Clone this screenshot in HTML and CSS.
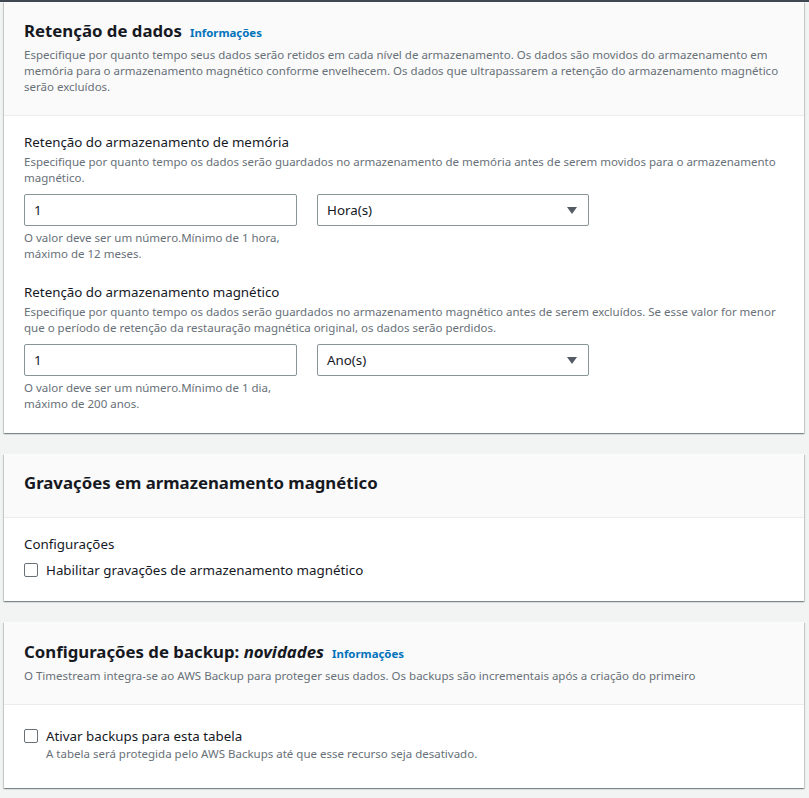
FILE: index.html
```html
<!DOCTYPE html>
<html lang="pt-BR">
<head>
<meta charset="utf-8">
<title>Retenção de dados</title>
<link rel="stylesheet" href="styles.css">
</head>
<body>
<div class="topbar"></div>
<main class="page">
  <section class="card">
    <header class="card-header">
      <h2 class="title">Retenção de dados<a class="info" href="#">Informações</a></h2>
      <p class="desc">Especifique por quanto tempo seus dados serão retidos em cada nível de armazenamento. Os dados são movidos do armazenamento em memória para o armazenamento magnético conforme envelhecem. Os dados que ultrapassarem a retenção do armazenamento magnético serão excluídos.</p>
    </header>
    <div class="card-body body-fields">
      <div class="field">
        <div class="label">Retenção do armazenamento de memória</div>
        <div class="field-desc">Especifique por quanto tempo os dados serão guardados no armazenamento de memória antes de serem movidos para o armazenamento magnético.</div>
        <div class="controls">
          <div class="col">
            <input class="input" type="text" value="1">
            <div class="constraint">O valor deve ser um número.Mínimo de 1 hora, máximo de 12 meses.</div>
          </div>
          <div class="select">
            <span>Hora(s)</span>
            <svg class="caret" width="10" height="7" viewBox="0 0 10 7"><path d="M0 0H10L5 7Z"/></svg>
          </div>
        </div>
      </div>
      <div class="field field-next">
        <div class="label">Retenção do armazenamento magnético</div>
        <div class="field-desc">Especifique por quanto tempo os dados serão guardados no armazenamento magnético antes de serem excluídos. Se esse valor for menor que o período de retenção da restauração magnética original, os dados serão perdidos.</div>
        <div class="controls">
          <div class="col">
            <input class="input" type="text" value="1">
            <div class="constraint">O valor deve ser um número.Mínimo de 1 dia, máximo de 200 anos.</div>
          </div>
          <div class="select">
            <span>Ano(s)</span>
            <svg class="caret" width="10" height="7" viewBox="0 0 10 7"><path d="M0 0H10L5 7Z"/></svg>
          </div>
        </div>
      </div>
    </div>
  </section>

  <section class="card">
    <header class="card-header header-solo">
      <h2 class="title">Gravações em armazenamento magnético</h2>
    </header>
    <div class="card-body body-tight">
      <div class="label">Configurações</div>
      <label class="check-row">
        <input class="checkbox" type="checkbox">
        <span>Habilitar gravações de armazenamento magnético</span>
      </label>
    </div>
  </section>

  <section class="card">
    <header class="card-header header-backup">
      <h2 class="title">Configurações de backup: <em>novidades</em><a class="info" href="#">Informações</a></h2>
      <p class="desc">O Timestream integra-se ao AWS Backup para proteger seus dados. Os backups são incrementais após a criação do primeiro</p>
    </header>
    <div class="card-body body-backup">
      <label class="check-row">
        <input class="checkbox" type="checkbox">
        <span>Ativar backups para esta tabela</span>
      </label>
      <div class="check-desc">A tabela será protegida pelo AWS Backups até que esse recurso seja desativado.</div>
    </div>
  </section>
</main>
</body>
</html>
```

FILE: styles.css
```css
* { box-sizing: border-box; }

html, body {
  margin: 0;
  padding: 0;
  background: #f2f3f3;
  font-family: "Noto Sans", "Open Sans", sans-serif;
  color: #16191f;
}

.topbar {
  height: 2px;
  background: #3f4752;
}

.page {
  padding: 0 5px 20px 4px;
  display: flex;
  flex-direction: column;
  gap: 21px;
}

.card {
  background: #ffffff;
  box-shadow: 0 1px 1px 0 rgba(0, 28, 36, 0.3), 1px 1px 1px 0 rgba(0, 28, 36, 0.15), -1px 1px 1px 0 rgba(0, 28, 36, 0.15);
}

.card-header {
  background: #fafafa;
  border-bottom: 1px solid #eaeded;
  padding: 18px 20px 20px;
}

.header-solo {
  padding-bottom: 23px;
}

.header-backup {
  padding-top: 19px;
}

.title {
  margin: 0;
  font-size: 16.8px;
  line-height: 22px;
  font-weight: 700;
  color: #16191f;
}

.title em {
  font-style: italic;
}

.info {
  margin-left: 8px;
  font-size: 11.4px;
  line-height: 1;
  font-weight: 700;
  color: #0073bb;
  text-decoration: none;
}

.desc {
  margin: 5px 0 0;
  font-size: 11.5px;
  line-height: 16px;
  color: #687078;
}

.card-body {
  padding: 16px 20px 20px;
}

.body-fields {
  padding-bottom: 21px;
}

.body-tight {
  padding-bottom: 21px;
}

.body-backup {
  padding-top: 21px;
  padding-bottom: 26px;
}

.field-next {
  margin-top: 20px;
}

.label {
  font-size: 13.35px;
  line-height: 20px;
  color: #16191f;
}

.field-desc {
  margin-top: 2px;
  font-size: 11.5px;
  line-height: 16px;
  color: #687078;
}

.controls {
  margin-top: 8px;
  display: grid;
  grid-template-columns: 273px 272px;
  column-gap: 20px;
  align-items: start;
}

.input {
  display: block;
  width: 100%;
  height: 32px;
  margin: 0;
  padding: 0 9px;
  border: 1px solid #879596;
  border-radius: 2px;
  background: #ffffff;
  font-family: inherit;
  font-size: 13.35px;
  color: #16191f;
  outline: none;
}

.constraint {
  margin-top: 4px;
  font-size: 11.5px;
  line-height: 16px;
  color: #687078;
}

.select {
  height: 32px;
  display: flex;
  align-items: center;
  justify-content: space-between;
  padding: 0 11px 0 9px;
  border: 1px solid #879596;
  border-radius: 2px;
  background: #ffffff;
  font-size: 13.35px;
  color: #16191f;
}

.caret {
  display: block;
  fill: #545b64;
}

.check-row {
  display: flex;
  align-items: center;
  gap: 8px;
  font-size: 13.35px;
  line-height: 20px;
  color: #16191f;
}

.body-tight .check-row {
  margin-top: 6px;
}

.checkbox {
  appearance: none;
  -webkit-appearance: none;
  width: 14px;
  height: 14px;
  margin: 0;
  flex: none;
  border: 1px solid #687078;
  border-radius: 2px;
  background: #ffffff;
}

.check-desc {
  padding-left: 22px;
  font-size: 11.5px;
  line-height: 16px;
  color: #687078;
}
```
